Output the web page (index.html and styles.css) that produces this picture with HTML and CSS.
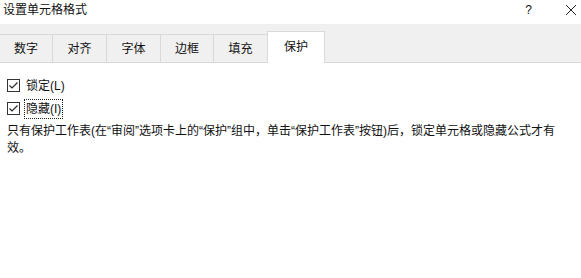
FILE: index.html
```html
<!DOCTYPE html>
<html lang="zh-CN">
<head>
<meta charset="utf-8">
<title>设置单元格格式</title>
<link rel="stylesheet" href="styles.css">
</head>
<body>
<div class="dialog">
  <div class="titlebar">
    <span class="title">设置单元格格式</span>
    <span class="tb-btns">
      <span class="help">?</span>
      <svg class="close" width="12" height="12" viewBox="0 0 12 12"><path d="M1 1 L11 11 M11 1 L1 11" stroke="#222" stroke-width="1" fill="none"/></svg>
    </span>
  </div>
  <div class="tabstrip">
    <div class="tab w53">数字</div>
    <div class="tab w54">对齐</div>
    <div class="tab w54">字体</div>
    <div class="tab w53">边框</div>
    <div class="tab w54">填充</div>
    <div class="tab active">保护</div>
  </div>
  <div class="content">
    <div class="check-row">
      <svg class="cb" width="13" height="13" viewBox="0 0 13 13"><rect x="0.5" y="0.5" width="12" height="12" fill="#fff" stroke="#333"/><path d="M2.5 6.5 L5 9 L10.5 3.5" stroke="#222" stroke-width="1.1" fill="none"/></svg>
      <span class="label">锁定(L)</span>
    </div>
    <div class="check-row second">
      <svg class="cb" width="13" height="13" viewBox="0 0 13 13"><rect x="0.5" y="0.5" width="12" height="12" fill="#fff" stroke="#333"/><path d="M2.5 6.5 L5 9 L10.5 3.5" stroke="#222" stroke-width="1.1" fill="none"/></svg>
      <span class="label focus">隐藏(I)</span>
    </div>
    <p class="note">只有保护工作表(在“审阅”选项卡上的“保护”组中，单击“保护工作表”按钮)后，锁定单元格或隐藏公式才有效。</p>
  </div>
</div>
</body>
</html>
```
FILE: styles.css
```css
html, body {
  margin: 0;
  padding: 0;
  background: #fff;
}
body {
  font-family: "Liberation Sans", "Noto Sans CJK SC", sans-serif;
  font-size: 12px;
  color: #111;
}
.dialog {
  width: 581px;
  height: 278px;
  overflow: hidden;
  background: #fff;
}
.titlebar {
  height: 24px;
  display: flex;
  align-items: center;
  justify-content: space-between;
  padding: 0 3px 4px 3px;
  box-sizing: border-box;
}
.title {
  font-size: 12px;
  line-height: 16px;
}
.tb-btns {
  display: flex;
  align-items: center;
  gap: 33px;
}
.help {
  font-size: 12px;
  line-height: 14px;
}
.close {
  margin-right: 1px;
}
.tabstrip {
  height: 38px;
  box-sizing: content-box;
  background: #f0f0f0;
  border-bottom: 1px solid #d9d9d9;
  display: flex;
  align-items: flex-end;
}
.tab {
  height: 28px;
  box-sizing: border-box;
  border: 1px solid #d9d9d9;
  border-bottom: none;
  border-left: none;
  background: #f0f0f0;
  display: flex;
  align-items: center;
  justify-content: center;
  line-height: 16px;
}
.w53 { width: 53px; }
.w54 { width: 54px; }
.tab.active {
  width: 58px;
  height: 32px;
  margin-bottom: -1px;
  background: #fff;
  border-left: 1px solid #d9d9d9;
  margin-left: -1px;
  padding-bottom: 2px;
}
.content {
  padding: 14px 7px 0 7px;
}
.check-row {
  display: flex;
  align-items: center;
  height: 17px;
}
.check-row.second {
  margin-top: 6px;
}
.cb {
  flex: none;
  margin-right: 4px;
}
.label {
  line-height: 16px;
  padding: 0 1px;
  border: 1px solid transparent;
}
.label.focus {
  border: 1px dotted #222;
  padding: 1px 1px;
}
.note {
  margin: 6px 0 0 0;
  line-height: 17px;
  width: 560px;
}
```
